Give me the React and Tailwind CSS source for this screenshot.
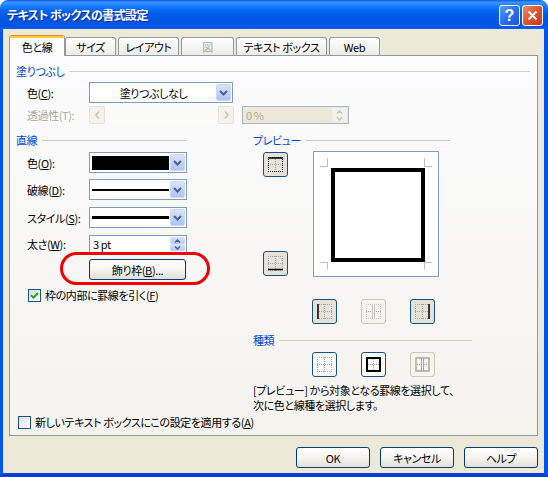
import React from "react";

const font = "font-['Noto_Sans_CJK_JP',sans-serif] [font-feature-settings:'palt']";
const GREY = "#A6A6A6";

const Key = ({ children }) => <span className="underline underline-offset-1">{children}</span>;

const ChevronDown = ({ color = "#4D6185" }) => (
  <svg width="9" height="6" viewBox="0 0 9 6">
    <path d="M1 1l3.5 3.5L8 1" fill="none" stroke={color} strokeWidth="2" />
  </svg>
);

const SmallArrow = ({ up, color = "#4D6185" }) => (
  <svg width="7" height="4" viewBox="0 0 7 4">
    <path d={up ? "M1 3.5l2.5-2.5L6 3.5" : "M1 0.5l2.5 2.5L6 0.5"} fill="none" stroke={color} strokeWidth="1.5" />
  </svg>
);

const DropButton = () => (
  <div className="flex w-[15px] items-center justify-center rounded-[2px] border border-[#C9D7FA] bg-gradient-to-b from-[#D8E3FD] to-[#AFC4F5]">
    <ChevronDown />
  </div>
);

const Combo = ({ className, children }) => (
  <div className={`flex h-[21px] border border-[#7F9DB9] bg-white p-px ${className}`}>
    <div className="flex min-w-0 flex-1 items-center">{children}</div>
    <DropButton />
  </div>
);

const CheckBox = ({ checked }) => (
  <div className="flex h-[13px] w-[13px] items-center justify-center border border-[#1C5180] bg-gradient-to-br from-[#DCDCD7] to-white">
    {checked && (
      <svg width="9" height="9" viewBox="0 0 9 9">
        <path d="M1 4.2l2.4 2.4L8 2" fill="none" stroke="#21A121" strokeWidth="2" />
      </svg>
    )}
  </div>
);

const Header = ({ children, className = "" }) => (
  <div className={`flex h-[14px] items-center ${className}`}>
    <span className="text-[#0046D5]">{children}</span>
    <div className="ml-[5px] h-px flex-1 bg-[#D0D0BF]" />
  </div>
);

const PushButton = ({ children, className = "" }) => (
  <div
    className={`flex h-[21px] items-center justify-center rounded-[3px] border border-[#003C74] bg-gradient-to-b from-white via-[#F5F4F0] to-[#E3E0D6] ${className}`}
  >
    {children}
  </div>
);

const IconBtn = ({ state = "on", children }) => {
  const cls =
    state === "on"
      ? "border-[#1C4F80] bg-[#E5E3D9]"
      : state === "off"
      ? "border-[#CAC8BB] bg-[#F5F4EE]"
      : "border-[#1C4F80] bg-[#FBFBF9]";
  return (
    <div className={`flex h-[25px] w-[25px] items-center justify-center rounded-[3px] border ${cls}`}>
      {children}
    </div>
  );
};

// dashes start on whole pixels so the dots stay crisp
const Dotted = ({ c = GREY, outer = true, cross = true, v = true }) => (
  <>
    {outer && (
      <path d="M0 0.5H15M0 14.5H15M0.5 0V15M14.5 0V15" fill="none" stroke={c} strokeDasharray="1 1" />
    )}
    {cross && v && <path d="M7.5 0V15" stroke={GREY} strokeDasharray="1 1" />}
    {cross && <path d="M0 7.5H15" stroke={GREY} strokeDasharray="1 1" />}
  </>
);

const Ico = ({ children }) => (
  <svg width="15" height="15" viewBox="0 0 15 15">
    {children}
  </svg>
);

const TitleBar = () => (
  <div className="flex h-[29px] items-start bg-[linear-gradient(to_bottom,#0A5AE6_0%,#3D93FF_8%,#2A8AFF_14%,#1279FB_24%,#0367F2_36%,#005CE8_50%,#0056E3_70%,#0055E5_88%,#0060F5_100%)] pl-[7px] pr-[5px]">
    <div className="mt-[7px] flex-1 text-[12px] font-bold leading-[15px] tracking-[-0.6px] text-white [text-shadow:1px_1px_0_#0A2A9C]">
      テキスト ボックスの書式設定
    </div>
    <div className="mt-[5px] flex gap-[2px]">
      <div className="flex h-[21px] w-[21px] items-center justify-center rounded-[3px] border border-white bg-gradient-to-br from-[#5C9DFF] via-[#2B6FF2] to-[#1E55D8] font-['Liberation_Sans',sans-serif] text-[16px] font-bold tracking-normal text-white">
        ?
      </div>
      <div className="flex h-[21px] w-[21px] items-center justify-center rounded-[3px] border border-white bg-gradient-to-br from-[#EE8A68] via-[#DE5330] to-[#C43A14]">
        <svg width="11" height="11" viewBox="0 0 11 11">
          <path d="M1.5 1.5l8 8M9.5 1.5l-8 8" stroke="white" strokeWidth="2" />
        </svg>
      </div>
    </div>
  </div>
);

const Tabs = () => (
  <div className="flex h-[20px] items-end">
    <div className="relative z-10 -mb-px flex h-[21px] w-[56px] flex-col overflow-hidden rounded-t-[3px] border-x border-[#919B9C] bg-[#FCFCFE]">
      <div className="h-[3px] border-t border-[#E68B2C] bg-[#FFC83C]" />
      <div className="flex flex-1 items-center justify-center">色と線</div>
    </div>
    <div className="flex h-[18px] w-[51px] items-center justify-center rounded-t-[3px] border-x border-t border-[#919B9C] bg-gradient-to-b from-white to-[#ECEBE6]">
      サイズ
    </div>
    <div className="ml-[2px] flex h-[18px] w-[61px] items-center justify-center rounded-t-[3px] border-x border-t border-[#919B9C] bg-gradient-to-b from-white to-[#ECEBE6]">
      レイアウト
    </div>
    <div className="ml-[2px] flex h-[18px] w-[53px] items-center justify-center rounded-t-[3px] border-x border-t border-[#919B9C] bg-gradient-to-b from-white to-[#ECEBE6] text-[#ACA899]">
      図
    </div>
    <div className="ml-[2px] flex h-[18px] w-[91px] items-center justify-center rounded-t-[3px] border-x border-t border-[#919B9C] bg-gradient-to-b from-white to-[#ECEBE6]">
      テキスト ボックス
    </div>
    <div className="ml-[2px] flex h-[18px] w-[51px] items-center justify-center rounded-t-[3px] border-x border-t border-[#919B9C] bg-gradient-to-b from-white to-[#ECEBE6]">
      Web
    </div>
  </div>
);

const FillSection = () => (
  <>
    <Header>塗りつぶし</Header>
    <div className="ml-[11px] mt-[4px] flex items-center">
      <div className="w-[62px]">
        色(<Key>C</Key>):
      </div>
      <Combo className="w-[144px]">
        <div className="flex-1 text-center">塗りつぶしなし</div>
      </Combo>
    </div>
    <div className="ml-[11px] mt-[3px] flex items-center">
      <div className="w-[62px] text-[#ACA899]">透過性(T):</div>
      <div className="flex h-[18px] w-[145px] bg-[#FBFBF7]">
        <div className="flex w-[16px] items-center justify-center rounded-[2px] border border-[#E6E4DA] bg-[#F3F2EC]">
          <svg width="5" height="8" viewBox="0 0 5 8">
            <path d="M4 0.5L1 4l3 3.5" fill="none" stroke="#C8C6B9" strokeWidth="1.6" />
          </svg>
        </div>
        <div className="flex-1" />
        <div className="flex w-[16px] items-center justify-center rounded-[2px] border border-[#E6E4DA] bg-[#F3F2EC]">
          <svg width="5" height="8" viewBox="0 0 5 8">
            <path d="M1 0.5L4 4l-3 3.5" fill="none" stroke="#C8C6B9" strokeWidth="1.6" />
          </svg>
        </div>
      </div>
      <div className="ml-[8px] flex h-[18px] w-[107px] border border-[#A5B7CC] bg-[#EBE8D8] p-px">
        <div className="flex flex-1 items-center pl-[2px] text-[#ACA899]">0 %</div>
        <div className="flex w-[15px] flex-col">
          <div className="flex flex-1 items-center justify-center rounded-[2px] bg-[#F2F1EB]">
            <SmallArrow up color="#C8C6B9" />
          </div>
          <div className="flex flex-1 items-center justify-center rounded-[2px] bg-[#F2F1EB]">
            <SmallArrow color="#C8C6B9" />
          </div>
        </div>
      </div>
    </div>
  </>
);

const LineSection = () => (
  <div className="w-[171px]">
    <Header>直線</Header>
    <div className="ml-[11px] mt-[5px] flex items-center">
      <div className="w-[62px]">
        色(<Key>O</Key>):
      </div>
      <Combo className="w-[98px]">
        <div className="ml-px h-[14px] w-[77px] bg-black" />
      </Combo>
    </div>
    <div className="ml-[11px] mt-[6px] flex items-center">
      <div className="w-[62px]">
        破線(<Key>D</Key>):
      </div>
      <Combo className="w-[98px]">
        <div className="ml-px h-[2px] w-[77px] bg-black" />
      </Combo>
    </div>
    <div className="ml-[11px] mt-[7px] flex items-center">
      <div className="w-[62px]">
        スタイル(<Key>S</Key>):
      </div>
      <Combo className="w-[98px]">
        <div className="ml-px h-[3px] w-[77px] bg-black" />
      </Combo>
    </div>
    <div className="ml-[11px] mt-[7px] flex items-center">
      <div className="w-[62px]">
        太さ(<Key>W</Key>):
      </div>
      <div className="flex h-[18px] w-[98px] border border-[#7F9DB9] bg-white p-px">
        <div className="flex flex-1 items-center pl-[2px]">3 pt</div>
        <div className="flex w-[15px] flex-col">
          <div className="flex flex-1 items-center justify-center rounded-[2px] bg-gradient-to-b from-[#D8E3FD] to-[#B7CAF6]">
            <SmallArrow up />
          </div>
          <div className="flex flex-1 items-center justify-center rounded-[2px] bg-gradient-to-b from-[#D8E3FD] to-[#B7CAF6]">
            <SmallArrow />
          </div>
        </div>
      </div>
    </div>
    <div className="relative ml-[73px] mt-[6px] w-[97px]">
      <PushButton className="h-[20px] w-[97px]">
        飾り枠(<Key>B</Key>)...
      </PushButton>
      <div className="absolute -bottom-[5px] -left-[29px] -right-[24px] -top-[7px] rounded-full border-[3px] border-[#F00000]" />
    </div>
    <div className="ml-[12px] mt-[8px] flex items-center whitespace-nowrap">
      <CheckBox checked />
      <span className="ml-[4px]">
        枠の内部に罫線を引く(<Key>F</Key>)
      </span>
    </div>
  </div>
);

const PreviewBox = () => (
  <div className="ml-[25px] h-[126px] w-[126px] border border-[#7F9DB9] bg-white">
    <svg width="124" height="124" viewBox="0 0 124 124">
      <path
        d="M13.5 6V14.5H6M110.5 6V14.5H118M6 110.5H13.5V118M118 110.5H110.5V118"
        fill="none"
        stroke="#C0C0C0"
      />
      <rect x="19" y="18" width="90" height="90" fill="none" stroke="#000" strokeWidth="4" />
    </svg>
  </div>
);

const PreviewSection = () => (
  <div className="ml-[66px] w-[219px]">
    <Header className="w-[197px]">プレビュー</Header>
    <div className="mt-[4px] flex">
      <div className="ml-[10px] flex h-[126px] w-[25px] flex-col justify-between py-px">
        <IconBtn>
          <Ico>
            <Dotted c="#000" />
            <path d="M0 1H15" stroke="#000" strokeWidth="1.5" />
          </Ico>
        </IconBtn>
        <IconBtn>
          <Ico>
            <Dotted />
            <path d="M0 13.5H15" stroke="#000" strokeWidth="1.5" />
          </Ico>
        </IconBtn>
      </div>
      <PreviewBox />
    </div>
    <div className="ml-[59px] mt-[22px] flex gap-[24px]">
      <IconBtn>
        <Ico>
          <Dotted />
          <path d="M1 0V15" stroke="#000" strokeWidth="1.5" />
        </Ico>
      </IconBtn>
      <IconBtn state="off">
        <Ico>
          <Dotted c="#C8C8C8" v={false} />
          <path d="M6.5 0.5V15M8.5 0.5V15" stroke="#C4C4C4" />
        </Ico>
      </IconBtn>
      <IconBtn>
        <Ico>
          <Dotted />
          <path d="M14 0V15" stroke="#000" strokeWidth="1.5" />
        </Ico>
      </IconBtn>
    </div>
    <Header className="mt-[9px]">種類</Header>
    <div className="ml-[59px] mt-[5px] flex gap-[24px]">
      <IconBtn state="plain">
        <Ico>
          <Dotted />
        </Ico>
      </IconBtn>
      <IconBtn state="plain">
        <Ico>
          <rect x="1" y="1" width="13" height="13" fill="none" stroke="#000" strokeWidth="2" />
          <path d="M7.5 2V13M2 7.5H13" stroke={GREY} strokeDasharray="1 1" />
        </Ico>
      </IconBtn>
      <IconBtn state="off">
        <Ico>
          <rect x="1" y="1" width="13" height="13" fill="none" stroke="#A9A89C" strokeWidth="1.5" />
          <path d="M6.5 1V14M8.5 1V14" stroke="#A9A89C" />
          <path d="M2 7.5H6M9 7.5H13" stroke="#B8B8B8" strokeDasharray="1 1" />
        </Ico>
      </IconBtn>
    </div>
    <div className="mt-[6px] whitespace-nowrap leading-[15px]">
      <div>[プレビュー] から対象となる罫線を選択して、</div>
      <div>次に色と線種を選択します。</div>
    </div>
  </div>
);

export default function App() {
  return (
    <div
      className={`flex h-[477px] w-[548px] flex-col overflow-hidden rounded-t-[8px] text-[11px] leading-[14px] tracking-[-0.4px] text-black ${font}`}
    >
      <TitleBar />
      <div className="flex flex-1 flex-col border-b-[4px] border-l-[3px] border-r-[4px] border-b-[#0041D6] border-l-[#0055EA] border-r-[#0055EA] bg-[#ECE9D8] pl-[6px] pr-[6px] pt-[6px]">
        <Tabs />
        <div className="h-[381px] border border-[#919B9C] bg-gradient-to-b from-[#FCFCFE] to-[#F4F3EE] pl-[6px] pr-[7px] pt-[8px]">
          <FillSection />
          <div className="mt-[9px] flex">
            <LineSection />
            <PreviewSection />
          </div>
          <div className="ml-[2px] mt-[2px] flex h-[14px] items-center whitespace-nowrap">
            <CheckBox />
            <span className="ml-[4px]">
              新しいテキスト ボックスにこの設定を適用する(<Key>A</Key>)
            </span>
          </div>
        </div>
        <div className="mt-[11px] flex justify-end gap-[10px]">
          <PushButton className="w-[74px]">OK</PushButton>
          <PushButton className="w-[74px]">キャンセル</PushButton>
          <PushButton className="w-[74px]">ヘルプ</PushButton>
        </div>
      </div>
    </div>
  );
}
